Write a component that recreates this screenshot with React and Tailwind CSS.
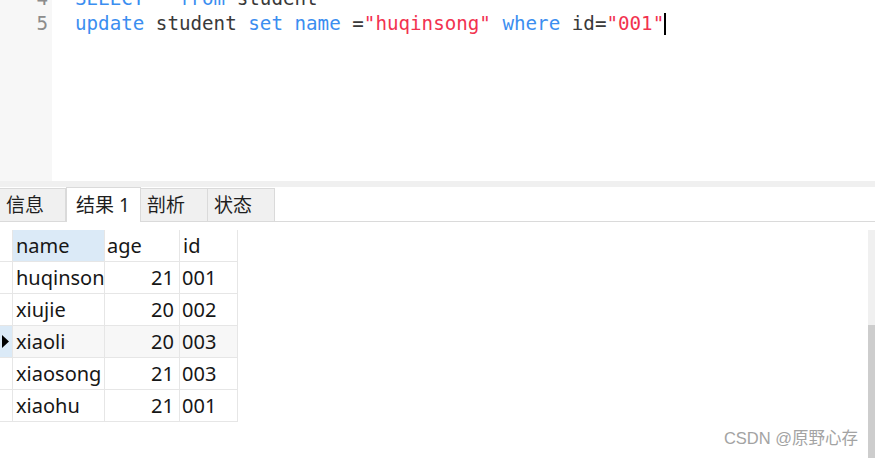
import React from "react";

const mono = { fontFamily: '"DejaVu Sans Mono", "Liberation Mono", monospace' };
const ui = { fontFamily: '"Noto Sans", "Noto Sans CJK SC", sans-serif' };

const rows = [
  { name: "huqinsong", age: 21, id: "001" },
  { name: "xiujie", age: 20, id: "002" },
  { name: "xiaoli", age: 20, id: "003", current: true },
  { name: "xiaosong", age: 21, id: "003" },
  { name: "xiaohu", age: 21, id: "001" },
];

const tabs = [
  { label: "信息", w: "w-[66px]" },
  { label: "结果 1", w: "w-[75px]", active: true },
  { label: "剖析", w: "w-[67px]" },
  { label: "状态", w: "w-[67px]" },
];

const Kw = ({ children }) => <span className="text-[#3b8ef0]">{children}</span>;
const Str = ({ children }) => <span className="text-[#f2324f]">{children}</span>;

export default function App() {
  return (
    <div className="w-[875px] h-[458px] overflow-hidden bg-white flex flex-col">
      {/* Editor */}
      <div className="h-[181px] flex overflow-hidden shrink-0">
        <div className="w-[52px] bg-[#f7f7f7] shrink-0">
          <div className="-mt-[14px] text-[19.2px] leading-[25px] text-[#8c8c8c] text-right pr-[4px]" style={mono}>
            <div>4</div>
            <div>5</div>
          </div>
        </div>
        <div className="pl-[23px] -mt-[14px] text-[19.2px] leading-[25px] text-[#3a3a3a] whitespace-pre" style={mono}>
          <div>
            <Kw>SELECT</Kw> * <Kw>from</Kw> student
          </div>
          <div className="flex items-center">
            <span>
              <Kw>update</Kw> student <Kw>set</Kw> <Kw>name</Kw> =<Str>"huqinsong"</Str> <Kw>where</Kw> id=<Str>"001"</Str>
            </span>
            <span className="w-[2px] h-[22px] bg-black" />
          </div>
        </div>
      </div>

      {/* Divider band */}
      <div className="h-[6px] bg-[#f0f0f0] shrink-0" />

      {/* Tabs */}
      <div className="h-[35px] flex items-end border-b border-[#dadada] shrink-0" style={ui}>
        {tabs.map((t) => (
          <div
            key={t.label}
            className={`${t.w} flex items-center text-[19px] text-[#1e1e1e] pl-[6px] ${
              t.active
                ? "h-[35px] bg-white border-x border-t border-[#dadada] -mb-px pl-[9px]"
                : "h-[33px] bg-[#f0f0f0] border-r border-t border-[#dadada]"
            }`}
          >
            {t.label}
          </div>
        ))}
      </div>

      {/* Results */}
      <div className="flex-1 flex relative">
        <div className="pt-[8px] flex-1" style={ui}>
          <div className="inline-grid grid-cols-[13px_92px_75px_58px] text-[20px] text-[#161616] leading-none">
            <div className="h-[32px] border-r border-b border-[#e6e6e6]" />
            <div className="h-[32px] bg-[#dbeaf7] border-r border-b border-[#e6e6e6] flex items-center pl-[3px]">name</div>
            <div className="h-[32px] border-r border-b border-[#e6e6e6] flex items-center pl-[2px]">age</div>
            <div className="h-[32px] border-r border-b border-[#e6e6e6] flex items-center pl-[3px]">id</div>
            {rows.map((r) => (
              <React.Fragment key={r.name}>
                <div
                  className={`h-[32px] border-r border-b border-[#e6e6e6] flex items-center ${
                    r.current ? "bg-[#dbeaf7]" : ""
                  }`}
                >
                  {r.current && (
                    <svg width="8" height="13" viewBox="0 0 8 13" className="ml-[2px]">
                      <path d="M0 0 L7 6.5 L0 13 Z" fill="#000" />
                    </svg>
                  )}
                </div>
                <div
                  className={`h-[32px] border-r border-b border-[#e6e6e6] flex items-center pl-[3px] overflow-hidden whitespace-nowrap ${
                    r.current ? "bg-[#f7f7f7]" : ""
                  }`}
                >
                  {r.name}
                </div>
                <div
                  className={`h-[32px] border-r border-b border-[#e6e6e6] flex items-center justify-end pr-[5px] ${
                    r.current ? "bg-[#f7f7f7]" : ""
                  }`}
                >
                  {r.age}
                </div>
                <div
                  className={`h-[32px] border-r border-b border-[#e6e6e6] flex items-center pl-[2px] ${
                    r.current ? "bg-[#f7f7f7]" : ""
                  }`}
                >
                  {r.id}
                </div>
              </React.Fragment>
            ))}
          </div>
        </div>

        {/* Scrollbar */}
        <div className="w-[7px] mt-[8px] flex flex-col shrink-0">
          <div className="h-[95px] bg-[#f0f0f0]" />
          <div className="flex-1 bg-[#cdcdcd]" />
        </div>

        {/* Watermark */}
        <div
          className="absolute right-[17px] bottom-[7px] text-[16.5px] text-[#a3a3a3]"
          style={{ fontFamily: '"Liberation Sans", "Noto Sans CJK SC", sans-serif' }}
        >
          CSDN @原野心存
        </div>
      </div>
    </div>
  );
}
